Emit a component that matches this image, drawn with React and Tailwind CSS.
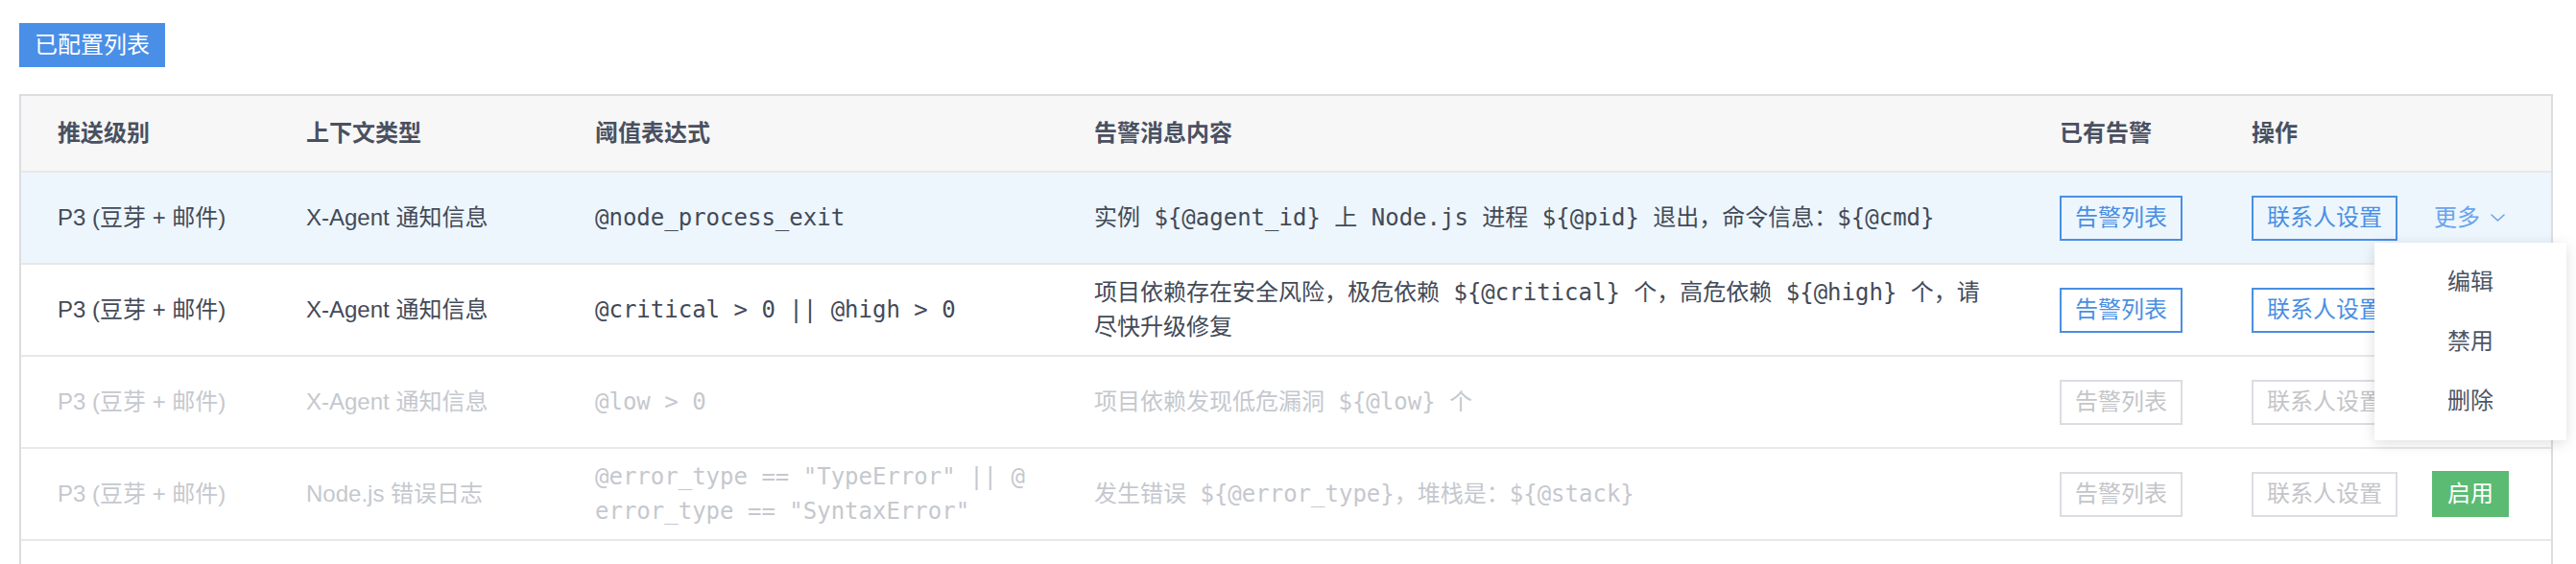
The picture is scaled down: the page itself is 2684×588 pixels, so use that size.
import React from 'react';

const sans = "font-['Liberation_Sans','Noto_Sans_CJK_SC',sans-serif]";
const mono = "font-['DejaVu_Sans_Mono','Noto_Sans_CJK_SC',monospace]";

const rows = [
  {
    level: 'P3 (豆芽 + 邮件)',
    ctx: 'X-Agent 通知信息',
    expr: '@node_process_exit',
    msg: '实例 ${@agent_id} 上 Node.js 进程 ${@pid} 退出，命令信息：${@cmd}',
    active: true,
    hover: true,
    menu: true,
  },
  {
    level: 'P3 (豆芽 + 邮件)',
    ctx: 'X-Agent 通知信息',
    expr: '@critical > 0 || @high > 0',
    msg: '项目依赖存在安全风险，极危依赖 ${@critical} 个，高危依赖 ${@high} 个，请尽快升级修复',
    active: true,
  },
  {
    level: 'P3 (豆芽 + 邮件)',
    ctx: 'X-Agent 通知信息',
    expr: '@low > 0',
    msg: '项目依赖发现低危漏洞 ${@low} 个',
    active: false,
  },
  {
    level: 'P3 (豆芽 + 邮件)',
    ctx: 'Node.js 错误日志',
    expr: '@error_type == "TypeError" || @error_type == "SyntaxError"',
    msg: '发生错误 ${@error_type}，堆栈是：${@stack}',
    active: false,
  },
  {
    level: 'P2 (豆芽 + 邮件)',
    ctx: 'Node.js 性能指标',
    expr: '@heap_used_percent > 80',
    msg: '实例 ${@agent_id} 上进程 ${@pid} 堆内存占比 ${@heap_used_percent}%',
    active: true,
  },
];

const cell = 'pl-[38px] pr-[26px] flex items-center';

const Chevron = () => (
  <svg width="15" height="8" viewBox="0 0 15 8" fill="none" className="ml-[11px]">
    <polyline points="1,1 7.5,7 14,1" stroke="currentColor" strokeWidth="1.6" strokeLinecap="round" strokeLinejoin="round" />
  </svg>
);

const OutlineButton = ({ label, active }) => (
  <div
    className={`h-[47px] px-[14px] flex items-center border-2 text-[24px] whitespace-nowrap ${
      active ? 'border-[#4a8fe3] text-[#4a8fe3]' : 'border-[#dcdde2] text-[#c4c5c9]'
    }`}
  >
    {label}
  </div>
);

const Row = ({ row }) => {
  const text = row.active ? 'text-[#434a58]' : 'text-[#c5c8ce]';
  return (
    <div
      className={`grid grid-cols-[259px_301px_520px_1006px_200px_350px] h-[96px] border-t-2 border-[#e8e8ea] ${
        row.hover ? 'bg-[#edf6fd]' : 'bg-white'
      }`}
    >
      <div className={`${cell} ${text} text-[24px]`}>{row.level}</div>
      <div className={`${cell} ${text} text-[24px]`}>{row.ctx}</div>
      <div className={`${cell} ${text} ${mono} text-[24px] leading-[36px]`}>
        <div className="break-all">{row.expr}</div>
      </div>
      <div className={`${cell} ${text} ${mono} text-[24px] leading-[36px]`}>
        <div className="break-all">{row.msg}</div>
      </div>
      <div className={cell}>
        <OutlineButton label="告警列表" active={row.active} />
      </div>
      <div className="pl-[38px] flex items-center">
        <OutlineButton label="联系人设置" active={row.active} />
        {row.active ? (
          <div className="relative ml-[38px] h-[36px] flex items-center text-[24px] text-[#6aa4ec]">
            <span>更多</span>
            <Chevron />
            {row.menu && (
              <div className="absolute left-[-62px] top-[44px] z-20 w-[200px] py-[10px] bg-white shadow-[0_3px_14px_rgba(0,0,0,0.13)]">
                {['编辑', '禁用', '删除'].map((item) => (
                  <div key={item} className="h-[62px] flex items-center justify-center text-[24px] text-[#4d5566]">
                    {item}
                  </div>
                ))}
              </div>
            )}
          </div>
        ) : (
          <div className="ml-[36px] h-[48px] px-[16px] flex items-center bg-[#5bbb73] text-white text-[24px]">
            启用
          </div>
        )}
      </div>
    </div>
  );
};

export default function App() {
  return (
    <div className={`min-h-screen bg-white pt-[24px] pl-[20px] ${sans}`}>
      {/* Title tag */}
      <div className="inline-flex h-[46px] px-[16px] items-center bg-[#4a8fe7] text-white text-[24px]">
        已配置列表
      </div>

      {/* Table */}
      <div className="mt-[28px] w-[2640px] border-2 border-b-0 border-[#dcdce1]">
        <div className="grid grid-cols-[259px_301px_520px_1006px_200px_350px] h-[78px] bg-[#f7f7f7] text-[24px] font-bold text-[#4a5060]">
          <div className={cell}>推送级别</div>
          <div className={cell}>上下文类型</div>
          <div className={cell}>阈值表达式</div>
          <div className={cell}>告警消息内容</div>
          <div className={cell}>已有告警</div>
          <div className={cell}>操作</div>
        </div>
        {rows.map((row, i) => (
          <Row key={i} row={row} />
        ))}
      </div>
    </div>
  );
}
